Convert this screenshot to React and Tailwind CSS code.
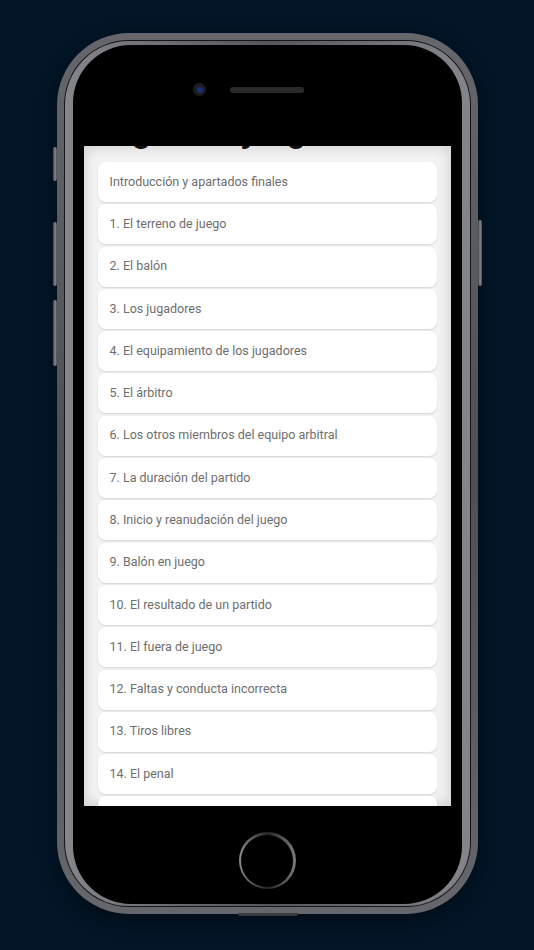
import React from "react";

const items = [
  "Introducción y apartados finales",
  "1. El terreno de juego",
  "2. El balón",
  "3. Los jugadores",
  "4. El equipamiento de los jugadores",
  "5. El árbitro",
  "6. Los otros miembros del equipo arbitral",
  "7. La duración del partido",
  "8. Inicio y reanudación del juego",
  "9. Balón en juego",
  "10. El resultado de un partido",
  "11. El fuera de juego",
  "12. Faltas y conducta incorrecta",
  "13. Tiros libres",
  "14. El penal",
  "15. El saque de banda",
];

function SideButton({ className }) {
  return (
    <div
      className={
        "absolute w-[4px] rounded-full bg-gradient-to-r from-[#3a3b3f] via-[#8a8b90] to-[#4a4b4f] " +
        className
      }
    />
  );
}

export default function App() {
  return (
    <div className="w-[534px] h-[950px] bg-[#021627] flex justify-center pt-[33px] font-['Roboto',sans-serif] overflow-hidden">
      <div className="relative w-[421px] h-[881px]">
        {/* side buttons */}
        <SideButton className="left-[-4px] top-[114px] h-[34px]" />
        <SideButton className="left-[-4px] top-[189px] h-[64px]" />
        <SideButton className="left-[-4px] top-[267px] h-[66px]" />
        <SideButton className="right-[-4px] top-[187px] h-[66px]" />

        {/* frame */}
        <div className="w-full h-full rounded-[72px] bg-gradient-to-b from-[#66676c] via-[#4e4f53] to-[#66676c] p-[7px] shadow-[0_6px_20px_rgba(0,0,0,0.5)]">
          <div className="w-full h-full rounded-[65px] bg-[#151517] p-[1px]">
            <div className="w-full h-full rounded-[64px] bg-gradient-to-r from-[#85868b] via-[#55565a] to-[#85868b] pt-[4px] pb-[2px] px-[8px]">
              <div className="w-full h-full rounded-[58px] bg-black flex flex-col items-center">
                {/* camera + speaker */}
                <div className="h-[101px] shrink-0 flex items-start pt-[38px] gap-[24px] pr-[37px]">
                  <div className="w-[13px] h-[13px] rounded-full bg-[#1c1c22] flex items-center justify-center">
                    <div className="w-[6px] h-[6px] rounded-full bg-[#1b2f7a]" />
                  </div>
                  <div className="mt-[3.5px] w-[74px] h-[6px] rounded-full bg-[#2a2a2c]" />
                </div>

                {/* screen */}
                <div className="w-[367px] h-[660px] shrink-0 bg-[#f3f3f3] overflow-hidden relative shadow-[inset_0_0_14px_rgba(0,0,0,0.18)]">
                  <div className="flex flex-col">
                    <h1 className="mt-[-32px] pl-[11px] text-[32px] leading-[36px] font-bold text-[#111] whitespace-nowrap">
                      Reglas de juego
                    </h1>
                    <div className="mt-[12px] px-[14px] flex flex-col gap-[2.3px]">
                      {items.map((t) => (
                        <div
                          key={t}
                          className="h-[40px] shrink-0 bg-white rounded-[8px] flex items-center px-[12px] text-[12.5px] text-[#6e6e6e] shadow-[0_1px_2px_rgba(0,0,0,0.13)]"
                        >
                          {t}
                        </div>
                      ))}
                    </div>
                  </div>
                </div>

                {/* home button */}
                <div className="mt-[26px] w-[57px] h-[57px] rounded-full bg-gradient-to-r from-[#8a8b90] via-[#26262a] to-[#7a7b80] p-[2.5px]">
                  <div className="w-full h-full rounded-full bg-black" />
                </div>
              </div>
            </div>
          </div>
        </div>

        {/* bottom port */}
        <div className="absolute left-[181px] bottom-[-2px] w-[60px] h-[3px] rounded-b-[2px] bg-[#3a3b3f]" />
      </div>
    </div>
  );
}
